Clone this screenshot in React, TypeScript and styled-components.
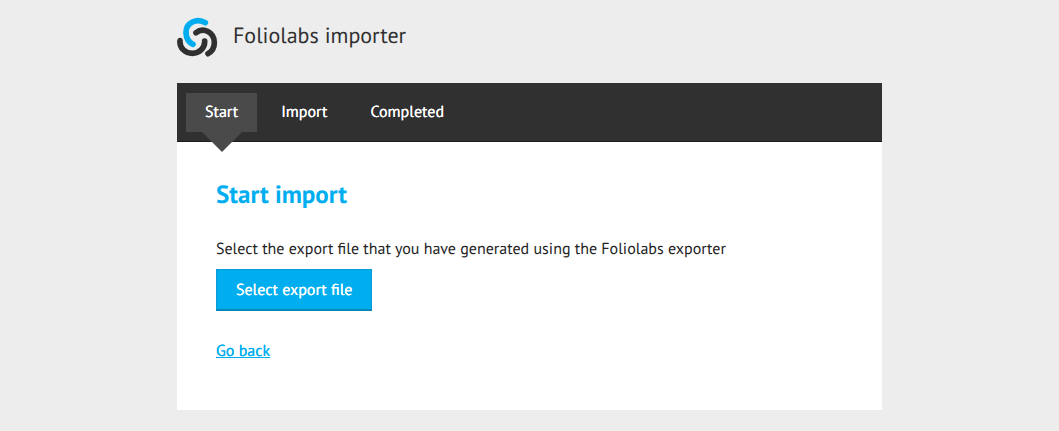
import React from "react";
import styled, { createGlobalStyle } from "styled-components";

const GlobalStyle = createGlobalStyle`
  *, *::before, *::after { box-sizing: border-box; }
  body {
    margin: 0;
    background: #ededed;
    color: #222;
    font-family: "PT Sans", Lato, "Noto Sans", sans-serif;
    font-size: 16px;
    line-height: 24px;
    text-rendering: geometricPrecision;
  }
`;

const Page = styled.div`
  max-width: 705px;
  margin: 0 auto;
  padding: 17px 0 21px;
`;

const Header = styled.header`
  display: flex;
  align-items: flex-start;
  gap: 15px;
  margin-bottom: 26px;
`;

const Logo = styled.svg`
  display: block;
  width: 41px;
  height: 40px;
`;

const SiteTitle = styled.h1`
  margin: 0;
  font-size: 22px;
  line-height: 38px;
  font-weight: 400;
  color: #303030;
`;

const Steps = styled.nav`
  display: flex;
  gap: 5px;
  padding: 10px 9px 9px;
  background: #303030;
  border-bottom: 1px solid #1f1b1c;
`;

const Step = styled.a<{ $active?: boolean }>`
  position: relative;
  padding: 7px 19px 8px;
  color: #fff;
  font-weight: 500;
  text-decoration: none;
  text-shadow: 0 0 0 currentColor;
  background: ${(p) => (p.$active ? "#4a4a4a" : "transparent")};

  &::after {
    content: "";
    display: ${(p) => (p.$active ? "block" : "none")};
    position: absolute;
    top: 100%;
    left: 50%;
    margin-left: -20px;
    border: 20px solid transparent;
    border-top-color: #4a4a4a;
    border-bottom: 0;
  }
`;

const Panel = styled.main`
  padding: 36px 39px 47px;
  background: #fff;
`;

const Heading = styled.h2`
  margin: 0 0 27px;
  font-size: 25px;
  line-height: 32px;
  font-weight: 700;
  color: #00aeef;
`;

const Intro = styled.p`
  margin: 0 0 8px;
`;

const FileButton = styled.button`
  display: block;
  margin: 0 0 28px;
  padding: 8px 19px 7px;
  border: 1px solid #0c9ad3;
  border-bottom: 2px solid #0786b9;
  background: #00aeef;
  color: #fff;
  font: inherit;
  font-weight: 500;
  text-rendering: inherit;
  text-shadow: 0 0 0 currentColor;
  cursor: pointer;
`;

const BackLink = styled.a`
  color: #00aeef;
  font-weight: 500;
  text-shadow: 0 0 0 currentColor;
`;

export default function App() {
  return (
    <>
      <GlobalStyle />
      <Page>
        <Header>
          <Logo viewBox="19 22 123 120" fill="none" strokeWidth="17" strokeLinecap="round" aria-hidden="true">
            <path d="M104 39C79 24 45 38 46 70C47 87 54 98 67 104" stroke="#00aeef" />
            <path d="M76 69C98 52 131 67 131 99C131 113 124 125 112 132" stroke="#303030" />
            <path d="M28 93C26 114 43 131 65 131C86 131 103 115 102 94" stroke="#303030" />
          </Logo>
          <SiteTitle>Foliolabs importer</SiteTitle>
        </Header>
        <Steps aria-label="Import steps">
          <Step href="#start" $active aria-current="step">Start</Step>
          <Step href="#import">Import</Step>
          <Step href="#completed">Completed</Step>
        </Steps>
        <Panel>
          <Heading>Start import</Heading>
          <Intro>Select the export file that you have generated using the Foliolabs exporter</Intro>
          <FileButton type="button">Select export file</FileButton>
          <BackLink href="#back">Go back</BackLink>
        </Panel>
      </Page>
    </>
  );
}
